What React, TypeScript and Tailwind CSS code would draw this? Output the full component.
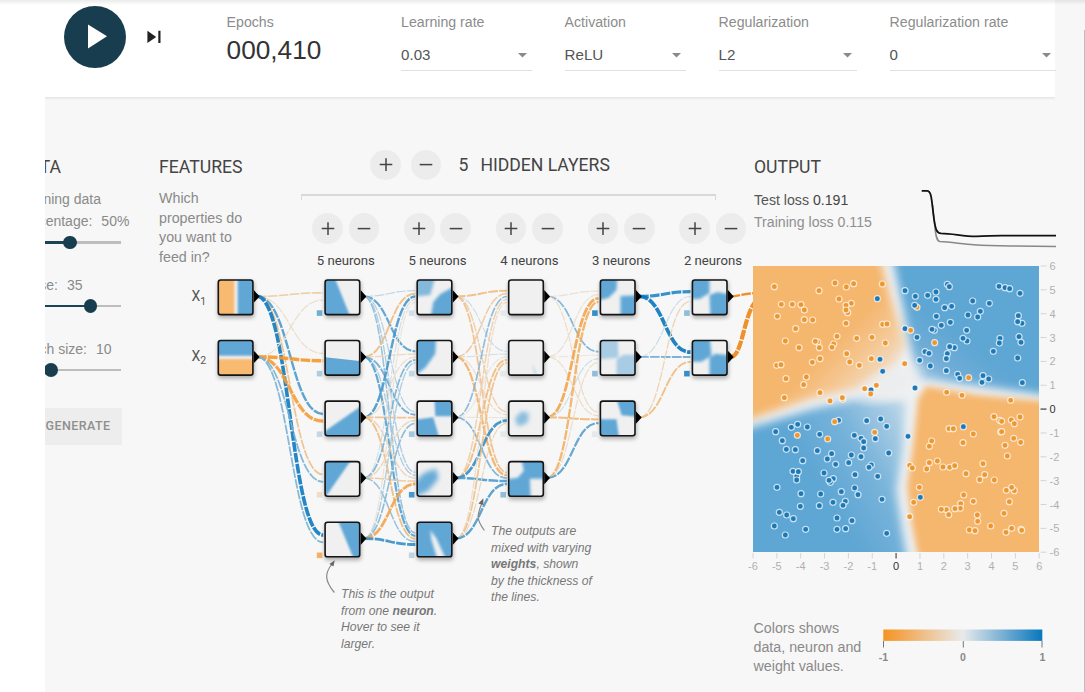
import React from "react";

const SANS = "font-['Liberation_Sans',Arial,sans-serif]";
const ROBOTO = "font-['Roboto',sans-serif]";

/* ---------- colour scale ---------- */
const mix = (a: number[], b: number[], t: number) =>
  `rgb(${a.map((v, i) => Math.round(v + (b[i] - v) * t)).join(",")})`;
const NEG = [245, 147, 34];
const MID = [232, 234, 235];
const POS = [8, 119, 189];
const weightColor = (w: number) => (w < 0 ? mix(MID, NEG, -w) : mix(MID, POS, w));

/* ---------- network ---------- */
const COL_X = [58.4, 165.2, 257.3, 348.8, 440.5, 532.5];
const rowTop = (r: number) => 7.1 + r * 60.55;
const SIZE = 36.4;
const COUNTS = [2, 5, 5, 4, 3, 2];

// WEIGHTS[layer][source][target]
const WEIGHTS: number[][][] = [
  [
    [-0.4, -0.18, 0.7, -0.5, 0.98],
    [-0.18, -0.95, -0.9, 0.5, 0.5],
  ],
  [
    [0.2, 0.65, 0.25, 0.3, 0.4],
    [-0.55, -0.25, 0.55, 0.3, 0.65],
    [0.72, -0.18, -0.5, -0.3, -0.55],
    [0.12, 0.5, -0.3, -0.4, 0.4],
    [-0.12, 0.3, 0.45, -0.8, 0.8],
  ],
  [
    [-0.55, 0.15, -0.35, -0.5],
    [-0.4, 0.12, -0.2, -0.65],
    [0.45, -0.1, -0.1, 0.5],
    [-0.35, -0.55, 0.8, 0.7],
    [-0.2, -0.5, -0.25, 0.7],
  ],
  [
    [-0.15, 0.5, -0.2],
    [-0.15, -0.07, -0.2],
    [-0.8, 0.15, -0.6],
    [-0.68, -0.2, 0.65],
  ],
  [
    [0.88, 1],
    [0.15, 0.55],
    [-0.3, -0.55],
  ],
];
const BIASES = [
  [0.6, 0.3, 0.2, -0.2, -0.75],
  [0.12, 0.2, 0.35, 0.8, 0.22],
  [0.02, 0.03, 0.03, 0.45],
  [0.9, 0.45, 0.03],
  [0.45, 0.9],
];

type Shape = { p: string; c?: string; o?: number };
const BLUE = "#60a7d6";
const PALE = "#f0f0f0";
const ORANGE = "#f8b971";
type Pic = { bg: string; shapes: Shape[]; blur?: number };
const PICS: Pic[][] = [
  [
    { bg: ORANGE, shapes: [{ p: "17,-5 45,-5 45,45 17,45", c: PALE }, { p: "20.3,-5 45,-5 45,45 20.3,45" }], blur: 1.1 },
    { bg: BLUE, shapes: [{ p: "-5,16 45,16 45,45 -5,45", c: PALE }, { p: "-5,19.3 45,19.3 45,45 -5,45", c: ORANGE }], blur: 1.1 },
  ],
  [
    { bg: PALE, shapes: [{ p: "-5,-5 9,-5 27.5,41 -5,41" }] },
    { bg: PALE, shapes: [{ p: "-5,17 41,22 41,41 -5,41" }], blur: 0.6 },
    { bg: PALE, shapes: [{ p: "-5,35 41,3 41,41 -5,41" }] },
    { bg: PALE, shapes: [{ p: "-5,-5 30,-5 -2,41 -5,41" }], blur: 1.1 },
    { bg: PALE, shapes: [{ p: "12,-5 41,-5 41,41 31,41" }] },
  ],
  [
    { bg: PALE, shapes: [{ p: "-5,-5 20,-5 14,16 -5,18", o: 0.75 }, { p: "41,6 24,15 17,23 14,41 41,41" }], blur: 1.8 },
    { bg: PALE, shapes: [{ p: "-5,-5 20,-5 19,14 9,28 -5,39" }], blur: 1.5 },
    { bg: PALE, shapes: [{ p: "18,-5 41,-5 41,16 19,16" }, { p: "-5,20 17,17 24,41 -5,41" }], blur: 1.2 },
    { bg: PALE, shapes: [{ p: "-5,24 8,12 20,8 22,18 12,30 -5,38", o: 0.95 }], blur: 2.4 },
    { bg: BLUE, shapes: [{ p: "14,9 20,17 31,41 22,41 15,18", c: PALE }], blur: 1.5 },
  ],
  [
    { bg: PALE, shapes: [] },
    { bg: PALE, shapes: [{ p: "24,24 30,34 26,34", o: 0.25 }] },
    { bg: PALE, shapes: [{ p: "8,17 14,11 21,13 20,22 12,26 8,23", o: 0.7 }], blur: 2.2 },
    { bg: BLUE, shapes: [{ p: "-5,-5 13,-5 16,10 10,17 -5,19", c: PALE }, { p: "22,18 41,18 41,41 23,41", c: PALE }], blur: 1.6 },
  ],
  [
    { bg: PALE, shapes: [{ p: "-5,-5 18,-5 17,11 9,19 -5,22" }, { p: "21,17 41,16 41,41 21,41" }], blur: 1.6 },
    { bg: PALE, shapes: [{ p: "-5,-5 18,-5 19,18 -5,20", o: 0.5 }, { p: "17,20 24,15 41,15 41,41 17,41", o: 0.5 }], blur: 1.7 },
    { bg: PALE, shapes: [{ p: "16,-5 41,-5 41,17 22,15" }, { p: "-5,19 17,19 20,41 -5,41" }], blur: 1.2 },
  ],
  [
    { bg: PALE, shapes: [{ p: "-5,-5 18,-5 18,14 8,20 -5,20" }, { p: "18,16 26,13 41,16 41,41 19,41" }], blur: 1.8 },
    { bg: PALE, shapes: [{ p: "-5,-5 18,-5 20,16 10,22 -5,22" }, { p: "18,18 24,14 41,16 41,41 18,41" }], blur: 1.4 },
  ],
];

function Links() {
  const out: React.ReactElement[] = [];
  WEIGHTS.forEach((layer, l) => {
    const n = layer.length;
    layer.forEach((targets, s) =>
      targets.forEach((w, t) => {
        const x0 = COL_X[l] + SIZE + 3;
        const y0 = rowTop(s) + 17.2;
        const x1 = COL_X[l + 1] - 1;
        const y1 = rowTop(t) + 17.4 + ((s - (n - 1) / 2) / n) * 14.5;
        const m = (x0 + x1) / 2;
        out.push(
          <path
            key={`${l}-${s}-${t}`}
            d={`M${x0} ${y0}C${m} ${y0} ${m} ${y1} ${x1} ${y1}`}
            fill="none"
            stroke={weightColor(w)}
            strokeWidth={1.1 + w * w * 2.6}
            strokeDasharray="9.7 1.3"
            strokeOpacity={0.9}
          />
        );
      })
    );
  });
  return <>{out}</>;
}

function Node({ col, row }: { col: number; row: number }) {
  const pic = PICS[col][row];
  return (
    <g transform={`translate(${COL_X[col]} ${rowTop(row)})`}>
      <rect x="0.5" y="0.5" width={SIZE} height={SIZE} rx="3" fill="#000" opacity="0.3" filter="url(#shadow)" />
      <path d={`M${SIZE} 11L${SIZE + 5.8} 17.3L${SIZE} 23.6Z`} fill="#000" />
      <g clipPath="url(#cell)">
        <rect width={SIZE} height={SIZE} fill={pic.bg} />
        <g style={{ filter: `blur(${pic.blur ?? 0.9}px)` }}>
          {pic.shapes.map((s, i) => (
            <polygon key={i} points={s.p} fill={s.c ?? BLUE} opacity={s.o ?? 1} />
          ))}
        </g>
      </g>
      <rect x="0.9" y="0.9" width={SIZE - 1.8} height={SIZE - 1.8} rx="2.4" fill="none" stroke="#151515" strokeWidth="1.6" />
      {col > 0 && <rect x="-7.4" y="31.2" width="5.6" height="5.6" fill={weightColor(BIASES[col - 1][row])} opacity="0.9" />}
    </g>
  );
}

function Network() {
  return (
    <div className="relative h-[420px] w-[594px]">
      <svg width="594" height="420" viewBox="0 0 594 420" className="block">
        <defs>
          <clipPath id="cell">
            <rect x="1" y="1" width={SIZE - 2} height={SIZE - 2} rx="2" />
          </clipPath>
          <filter id="shadow" x="-30%" y="-30%" width="160%" height="170%">
            <feOffset dy="2" />
            <feGaussianBlur stdDeviation="2" />
          </filter>
        </defs>
        <Links />
        <g fill="none" stroke="#f0902a" strokeDasharray="9.7 1.3">
          <path d="M571.5 24.5C580 24 586 21.2 600 21" strokeWidth="2.4" />
          <path d="M571.5 85C586 85 584 25 606 25" strokeWidth="4.2" />
        </g>
        {COUNTS.map((n, c) => Array.from({ length: n }, (_, r) => <Node key={`${c}${r}`} col={c} row={r} />))}
        <g fill="#555" className="font-['Roboto',sans-serif]">
          <text x="32.5" y="29" fontSize="14">X<tspan fontSize="10.5" dy="3.6">1</tspan></text>
          <text x="32.5" y="88.6" fontSize="14">X<tspan fontSize="10.5" dy="3.6">2</tspan></text>
        </g>
        <g fill="none" stroke="#888" strokeWidth="1.2">
          <path d="M175.4 320.5C165 308 166 301 173 292" />
          <path d="M325.4 258.5C317 247 318 243 323 231" />
        </g>
        <path d="M175.8 288.3l-5.4 3.6 4 2.6z" fill="#666" />
        <path d="M324.4 226.3l-5 5.3 4.9 1.4z" fill="#666" />
      </svg>
      <p className={`absolute left-[182px] top-[313.8px] text-[12.2px] italic leading-[16.7px] text-[#777] ${SANS}`}>
        This is the output<br />from one <b>neuron</b>.<br />Hover to see it<br />larger.
      </p>
      <p className={`absolute left-[332px] top-[251px] text-[12.2px] italic leading-[16.5px] text-[#777] ${SANS}`}>
        The outputs are<br />mixed with varying<br /><b>weights</b>, shown<br />by the thickness of<br />the lines.
      </p>
    </div>
  );
}

/* ---------- output heat map ---------- */
// Sample positions in thirds of a pixel, measured from (-24, -348) in the upper
// half and from (-24, 402) in the lower half.
const UPPER_ORANGE = [
  [88,410],[222,422],[270,399],[304,411],[326,401],[412,402],[282,447],[319,460],[303,466],[308,488],[303,480],[109,463],[142,463],[168,464],[178,480],[97,499],[178,509],[203,510],[303,520],[413,523],[426,522],[152,536],[276,559],[335,565],[381,562],[121,573],[218,576],[211,574],[223,593],[162,593],[266,582],[261,592],[421,579],[305,611],[379,626],[225,626],[202,637],[314,636],[343,646],[95,646],[108,644],[184,681],[123,686],[176,704],[359,716],[394,706],[225,728],[118,743],[255,753],[293,748],[292,743],[479,641],[377,732],[497,541],[569,578],[671,683],[605,727],[651,736],[797,751],
];
const UPPER_BLUE = [
  [397,446],[480,422],[511,439],[509,466],[548,436],[573,426],[573,448],[607,403],[613,410],[762,409],[780,413],[794,416],[825,430],[683,453],[733,460],[599,473],[620,469],[706,484],[698,501],[669,495],[574,499],[616,517],[589,526],[568,541],[561,538],[665,541],[820,497],[831,520],[818,515],[480,536],[516,562],[666,573],[654,565],[765,565],[763,579],[822,560],[828,577],[628,593],[614,590],[540,605],[552,610],[607,611],[604,626],[745,604],[818,624],[524,631],[556,648],[604,662],[405,628],[413,664],[638,673],[644,685],[714,677],[731,687],[711,697],[832,698],[510,714],[378,720],
];
const LOWER_ORANGE = [
  [747,50],[764,61],[770,64],[799,60],[808,71],[825,51],[767,96],[770,95],[612,86],[625,86],[685,102],[654,128],[806,115],[827,127],[780,136],[787,168],[560,123],[553,139],[577,183],[553,188],[545,207],[594,201],[614,202],[629,197],[714,191],[663,221],[719,224],[704,239],[748,240],[494,196],[502,204],[523,262],[506,307],[494,350],[656,285],[685,304],[647,311],[646,325],[630,326],[604,329],[589,328],[611,344],[697,345],[698,364],[673,390],[690,392],[737,378],[777,340],[793,305],[808,272],[784,271],[800,262],[800,385],[783,397],[828,388],[830,391],[157,106],[248,117],[269,65],[389,97],
];
const LOWER_BLUE = [
  [281,61],[365,62],[407,57],[425,79],[92,95],[139,82],[158,73],[187,81],[112,122],[224,103],[328,106],[348,115],[356,125],[391,116],[489,109],[124,148],[151,149],[217,152],[260,161],[356,144],[319,165],[348,170],[431,159],[173,182],[247,177],[272,193],[311,188],[379,195],[372,202],[155,229],[155,240],[144,214],[160,215],[237,219],[330,224],[398,229],[265,236],[256,247],[252,241],[329,264],[96,262],[168,281],[227,282],[289,275],[339,284],[411,298],[166,319],[223,317],[264,307],[301,304],[294,316],[103,337],[125,345],[145,356],[276,354],[321,362],[88,378],[121,405],[182,388],[276,388],[302,386],[425,400],[655,80],[526,292],
];

function Dots({ data, dy, color }: { data: number[][]; dy: number; color: string }) {
  return (
    <g fill={color} stroke="#fff" strokeOpacity="0.72" strokeWidth="1.2">
      {data.map(([x, y], i) => (
        <circle key={i} cx={(x - 24) / 3} cy={y / 3 + dy} r="3" />
      ))}
    </g>
  );
}

const TICKS = [-6, -5, -4, -3, -2, -1, 0, 1, 2, 3, 4, 5, 6];

function HeatMap() {
  return (
    <svg width="318" height="312" viewBox="0 0 318 312" className="block overflow-visible">
      <defs>
        <clipPath id="plot"><rect width="286" height="286" /></clipPath>
        <linearGradient id="nw" gradientUnits="userSpaceOnUse" x1="84" y1="74" x2="132" y2="122">
          <stop offset="0" stopColor="#f5b66e" />
          <stop offset="0.45" stopColor="#f5c793" />
          <stop offset="1" stopColor="#efe4d8" />
        </linearGradient>
        <linearGradient id="sw" gradientUnits="userSpaceOnUse" x1="62" y1="212" x2="154" y2="158">
          <stop offset="0" stopColor="#5ea6d4" />
          <stop offset="0.5" stopColor="#78b3da" />
          <stop offset="1" stopColor="#b4d2e6" />
        </linearGradient>
        <linearGradient id="ne" gradientUnits="userSpaceOnUse" x1="150" y1="122" x2="196" y2="62">
          <stop offset="0" stopColor="#c9dde9" />
          <stop offset="0.55" stopColor="#70add7" />
          <stop offset="1" stopColor="#5ea6d4" />
        </linearGradient>
        <radialGradient id="mid">
          <stop offset="0" stopColor="#ecedee" />
          <stop offset="0.4" stopColor="#ecedee" stopOpacity="0.8" />
          <stop offset="1" stopColor="#ecedee" stopOpacity="0" />
        </radialGradient>
      </defs>
      <g clipPath="url(#plot)">
        <rect width="286" height="286" fill="#eef1f3" />
        <g className="blur-[4px]">
          <polygon points="-20,-20 124,-20 137,30 153,80 138,105 108,122 60,132 -20,159" fill="url(#nw)" />
          <polygon points="137,-20 310,-20 310,131 165,112 159,88 150,40" fill="url(#ne)" />
          <polygon points="-20,167 60,143 110,132 152,136 150,180 143,225 149,265 157,310 -20,310" fill="url(#sw)" />
        </g>
        <g className="blur-[3px]">
          <polygon points="310,137 225,129 173,120 165,133 160,180 154,220 159,260 169,310 310,310" fill="#f5b66e" />
        </g>
        <ellipse cx="137" cy="118" rx="42" ry="20" fill="url(#mid)" transform="rotate(-24 137 118)" />
      </g>
      <Dots data={[[516, 472]]} dy={-116} color="#ec972f" />
      <Dots data={UPPER_BLUE} dy={-116} color="#1c79b8" />
      <Dots data={UPPER_ORANGE} dy={-116} color="#ec972f" />
      <Dots data={LOWER_BLUE} dy={134} color="#1c79b8" />
      <Dots data={LOWER_ORANGE} dy={134} color="#ec972f" />
      <g className="font-['Liberation_Sans',Arial,sans-serif]" fontSize="11">
        {TICKS.map((t) => {
          const x = (t + 6) * 23.85;
          const y = (6 - t) * 23.85;
          const ink = t === 0 ? "#333" : "#b0b0b0";
          const line = t === 0 ? "#777" : "#d4d4d4";
          return (
            <g key={t}>
              <path d={`M${x} 287V292.5M287.5 ${y}H293.5`} stroke={line} strokeWidth={t === 0 ? 1.6 : 1} />
              <text x={x} y="304" textAnchor="middle" fill={ink}>{t}</text>
              <text x="296.5" y={y + 4} fill={ink}>{t}</text>
            </g>
          );
        })}
      </g>
    </svg>
  );
}

/* ---------- small pieces ---------- */
function Round({ minus }: { minus?: boolean }) {
  return (
    <span className="flex size-[30.6px] shrink-0 items-center justify-center rounded-full bg-[#ececec]">
      <svg width="14" height="14" viewBox="0 0 14 14" stroke="#444" strokeWidth="1.5">
        <path d={minus ? "M0.7 6.6H13.3" : "M0.7 6.6H13.3M7 0.3V12.9"} />
      </svg>
    </span>
  );
}

function Select({ label, value, className }: { label: string; value: string; className: string }) {
  return (
    <div className={`shrink-0 ${className}`}>
      <div className="whitespace-nowrap text-[14.15px] leading-[20px] text-[#8c8c8c]">{label}</div>
      <div className="mt-[10px] flex h-[29px] items-center justify-between whitespace-nowrap border-b border-[#e0e0e0] pr-[5px] text-[15.1px] leading-[26px] text-[#555]">
        <span className="-mt-px">{value}</span>
        <svg width="9" height="5" viewBox="0 0 9 5"><path d="M0 0H9L4.5 4.6Z" fill="#8a8a8a" /></svg>
      </div>
    </div>
  );
}

function Slider({ knob, className }: { knob: string; className: string }) {
  return (
    <div className={`flex h-[14px] w-[76px] items-center ${className}`}>
      <span className={`h-[2.4px] shrink-0 bg-[#1b4457] ${knob}`} />
      <span className="relative z-10 -mx-[6.7px] size-[13.4px] shrink-0 rounded-full bg-[#183d4e]" />
      <span className="h-[2.4px] flex-1 bg-[#bdbdbd]" />
    </div>
  );
}

const LAYERS = ["5 neurons", "5 neurons", "4 neurons", "3 neurons", "2 neurons"];

export default function App() {
  return (
    <div className={`relative flex h-[692px] w-[1085px] flex-col overflow-hidden bg-white ${SANS}`}>
      <header className="relative z-10 flex h-[97px] shrink-0 bg-[#f7f7f7]">
        <div className="flex w-[1055px] shrink-0 bg-white pl-[64px]">
          <svg width="62" height="62" viewBox="0 0 62 62" className="mt-[6px] shrink-0">
            <circle cx="31" cy="31" r="31" fill="#183d4e" />
            <path d="M24 18.5V42.5L43 30.3Z" fill="#fff" />
          </svg>
          <svg width="14" height="14" viewBox="0 0 14 14" className="ml-[21px] mt-[30px] shrink-0" fill="#222">
            <path d="M0.4 0.8V13L9.2 7.1ZM11.3 0.8H13.5V13H11.3Z" />
          </svg>
          <div className="ml-[65.6px] mt-[12px] w-[174.5px] shrink-0">
            <div className="text-[14.15px] leading-[20px] text-[#8c8c8c]">Epochs</div>
            <div className="mt-[3px] text-[26.2px] leading-[31px] text-[#333]">000,410</div>
          </div>
          <div className="flex pt-[11.6px]">
            <Select label="Learning rate" value="0.03" className="w-[130.5px]" />
            <Select label="Activation" value="ReLU" className="ml-[33px] w-[121px]" />
            <Select label="Regularization" value="L2" className="ml-[33px] w-[138px]" />
            <Select label="Regularization rate" value="0" className="ml-[33px] w-[166px]" />
          </div>
        </div>
        <div className="absolute left-0 top-0 h-[5px] w-full bg-linear-to-b from-black/8 to-transparent" />
        <div className="absolute left-[45px] top-[97px] h-[3px] w-[1010px] bg-linear-to-b from-black/8 to-transparent" />
      </header>

      <main className="ml-[45px] flex flex-1 bg-[#f7f7f7]">
        <section className="w-[114px] shrink-0 overflow-hidden pt-[58px] text-[14px] text-[#8a8a8a]">
          <h2 className={`flex w-[16px] justify-end text-[17.6px] leading-[24px] text-[#444] ${ROBOTO}`}>DATA</h2>
          <div className="mt-[10.3px] flex w-[56px] justify-end whitespace-nowrap leading-[21.7px]">Training data</div>
          <div className="flex w-[84.4px] justify-end gap-[9px] whitespace-nowrap leading-[21.7px]"><span>percentage:</span><span>50%</span></div>
          <Slider knob="w-[25px]" className="mt-[2.8px]" />
          <div className="mt-[25.5px] flex w-[37.5px] justify-end gap-[9px] whitespace-nowrap leading-[21.7px]"><span>Noise:</span><span>35</span></div>
          <Slider knob="w-[45.3px]" className="mt-[2.3px]" />
          <div className="mt-[26px] flex w-[66.5px] justify-end gap-[9px] whitespace-nowrap leading-[21.7px]"><span>Batch size:</span><span>10</span></div>
          <Slider knob="w-[6px]" className="mt-[2.3px]" />
          <div className={`mt-[30.5px] flex h-[37px] w-[76.5px] items-center justify-end whitespace-nowrap bg-[#ededed] pr-[11px] text-[12.5px] font-medium tracking-[0.42px] text-[#8f8f8f] ${ROBOTO}`}>
            REGENERATE
          </div>
        </section>

        <section className="w-[594px] shrink-0">
          <div className="flex h-[175px] pt-[50px]">
            <div className="w-[142px] shrink-0 pt-[8px]">
              <h2 className={`text-[17.65px] leading-[24px] text-[#444] ${ROBOTO}`}>FEATURES</h2>
              <p className="mt-[10px] w-[100px] text-[14.25px] leading-[19.7px] text-[#8a8a8a]">
                Which<br />properties do<br />you want to<br />feed in?
              </p>
            </div>
            <div className="w-[451px] shrink-0">
              <div className="flex items-center gap-[10px] pl-[69.3px] pt-[2.7px]">
                <Round />
                <Round minus />
                <h2 className={`ml-[7px] flex gap-[12px] whitespace-nowrap text-[17.6px] leading-[24px] text-[#444] ${ROBOTO}`}>
                  <span>5</span><span>HIDDEN LAYERS</span>
                </h2>
              </div>
              <div className="mt-[14px] h-[6px] w-[415px] border-x border-t-2 border-[#d9d9d9]" />
              <div className="mt-[13px] flex pl-[11.3px]">
                {LAYERS.map((name, i) => (
                  <div key={i} className="flex w-[91.8px] shrink-0 flex-col">
                    <div className="flex gap-[5.8px]"><Round /><Round minus /></div>
                    <div className={`mt-[8.5px] w-[67px] text-center text-[13.2px] leading-[18px] text-[#444] ${ROBOTO}`}>{name}</div>
                  </div>
                ))}
              </div>
            </div>
          </div>
          <Network />
        </section>

        <section className="relative z-10 w-[332px] shrink-0 pt-[58px]">
          <h2 className={`pl-px text-[17.6px] leading-[24px] text-[#444] ${ROBOTO}`}>OUTPUT</h2>
          <div className="flex h-[87px] pt-[10px]">
            <div className="-mt-[0.5px] w-[168px] shrink-0 pl-px text-[14.15px] leading-[22.2px]">
              <div className="text-[#555]">Test loss <span className="text-[#444]">0.191</span></div>
              <div className="text-[#8f8f8f]">Training loss 0.115</div>
            </div>
            <svg width="136" height="62" viewBox="0 0 136 62" fill="none" className="block">
              <path d="M11.5 16C12.4 24 13 31 14 39C14.8 46 15.5 52.3 19 52.6C30 53 42 55.2 53 55.8C64 56.7 75 56.9 90 57L135 57.6" stroke="#888" strokeWidth="1.5" />
              <path d="M.7 1.9H6C11 2 10.5 12 13 30C14.5 40 15.5 44 20 44.3C32 44.5 42 47.3 55 47.4C66 47.4 72 46.5 82 46.6L135 46.7" stroke="#111" strokeWidth="1.8" />
            </svg>
          </div>
          <HeatMap />
          <div className="flex pt-[41px]">
            <p className="w-[124px] shrink-0 pl-[0.5px] text-[14.25px] leading-[19.2px] text-[#8a8a8a]">
              Colors shows<br />data, neuron and<br />weight values.
            </p>
            <svg width="172" height="40" viewBox="0 0 172 40" className="mt-[6px] block overflow-visible font-['Liberation_Sans',Arial,sans-serif]">
              <defs>
                <linearGradient id="scale">
                  <stop offset="0" stopColor="#f59322" />
                  <stop offset="0.5" stopColor="#e8eaeb" />
                  <stop offset="1" stopColor="#0877bd" />
                </linearGradient>
              </defs>
              <rect x="6.3" y="4.5" width="159" height="11.4" fill="url(#scale)" />
              <path d="M6.5 16V22.5M86.3 16V22.5M165 16V22.5" stroke="#777" strokeWidth="1" />
              <g fontSize="10.5" fontWeight="700" fill="#888" textAnchor="middle">
                <text x="6.5" y="36.3">-1</text>
                <text x="86" y="36.3">0</text>
                <text x="165.4" y="36.3">1</text>
              </g>
            </svg>
          </div>
        </section>
      </main>
      <div className="absolute right-0 top-[30px] z-20 h-[662px] w-px bg-[#bdbdbd]" />
    </div>
  );
}
